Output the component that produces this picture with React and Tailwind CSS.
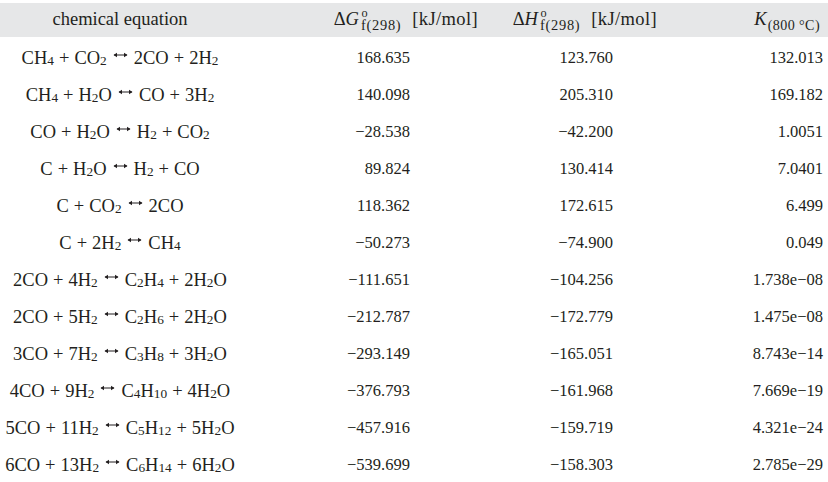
const S = ({ children }) => (
  <sub className="text-[0.72em] relative top-[0.12em] align-baseline">{children}</sub>
);

const Arrow = () => (
  <svg width="15" height="8" viewBox="0 0 15 8" className="inline-block mx-[6px] align-[0.25em]">
    <path d="M1 4 H14" stroke="#231f20" strokeWidth="1" />
    <path d="M0.5 4 L4 1.8 L4 6.2 Z" fill="#231f20" />
    <path d="M14.5 4 L11 1.8 L11 6.2 Z" fill="#231f20" />
  </svg>
);

const P = () => <span className="mx-[5px]">+</span>;

const rows = [
  [<>CH<S>4</S><P />CO<S>2</S><Arrow />2CO<P />2H<S>2</S></>, "168.635", "123.760", "132.013"],
  [<>CH<S>4</S><P />H<S>2</S>O<Arrow />CO<P />3H<S>2</S></>, "140.098", "205.310", "169.182"],
  [<>CO<P />H<S>2</S>O<Arrow />H<S>2</S><P />CO<S>2</S></>, "−28.538", "−42.200", "1.0051"],
  [<>C<P />H<S>2</S>O<Arrow />H<S>2</S><P />CO</>, "89.824", "130.414", "7.0401"],
  [<>C<P />CO<S>2</S><Arrow />2CO</>, "118.362", "172.615", "6.499"],
  [<>C<P />2H<S>2</S><Arrow />CH<S>4</S></>, "−50.273", "−74.900", "0.049"],
  [<>2CO<P />4H<S>2</S><Arrow />C<S>2</S>H<S>4</S><P />2H<S>2</S>O</>, "−111.651", "−104.256", "1.738e−08"],
  [<>2CO<P />5H<S>2</S><Arrow />C<S>2</S>H<S>6</S><P />2H<S>2</S>O</>, "−212.787", "−172.779", "1.475e−08"],
  [<>3CO<P />7H<S>2</S><Arrow />C<S>3</S>H<S>8</S><P />3H<S>2</S>O</>, "−293.149", "−165.051", "8.743e−14"],
  [<>4CO<P />9H<S>2</S><Arrow />C<S>4</S>H<S>10</S><P />4H<S>2</S>O</>, "−376.793", "−161.968", "7.669e−19"],
  [<>5CO<P />11H<S>2</S><Arrow />C<S>5</S>H<S>12</S><P />5H<S>2</S>O</>, "−457.916", "−159.719", "4.321e−24"],
  [<>6CO<P />13H<S>2</S><Arrow />C<S>6</S>H<S>14</S><P />6H<S>2</S>O</>, "−539.699", "−158.303", "2.785e−29"],
];

// ΔG°f(298) style header: small "o" sits above the "f(298)" subscript
const Delta = ({ sym }) => (
  <span className="whitespace-nowrap">
    Δ<i className="mr-[2px]">{sym}</i>
    <span className="relative top-[0.32em] text-[0.78em] tracking-[0.05em]">
      f(298)
      <span className="absolute left-[0.05em] top-[-1.05em] text-[0.85em]">o</span>
    </span>
    <span className="ml-[11px] tracking-[0.02em]">[kJ/mol]</span>
  </span>
);

export default function App() {
  return (
    <div
      className="w-[828px] h-[482px] overflow-hidden bg-white text-[#231f20] text-[18.5px] pt-[3px]"
      style={{ fontFamily: '"Liberation Serif", "Times New Roman", serif' }}
    >
      <div className="grid grid-cols-[240px_250px_185px_153px] h-[34px] items-center bg-[#e6e7e8]">
        <div className="text-center">chemical equation</div>
        <div className="text-right pr-[12px]">
          <Delta sym="G" />
        </div>
        <div className="text-right pr-[18px]">
          <Delta sym="H" />
        </div>
        <div className="text-right pr-[8px] whitespace-nowrap">
          <i>K</i>
          <span className="text-[0.76em] relative top-[0.35em] ml-[1px] tracking-[0.03em]">(800 °C)</span>
        </div>
      </div>
      <div className="mt-[3px]">
        {rows.map((r, i) => (
          <div key={i} className="grid grid-cols-[240px_250px_185px_153px] h-[37px] items-center">
            <div className="text-center whitespace-nowrap">{r[0]}</div>
            <div className="text-right pr-[80px] text-[16.5px]">{r[1]}</div>
            <div className="text-right pr-[62px] text-[16.5px]">{r[2]}</div>
            <div className="text-right pr-[5px] text-[16.5px]">{r[3]}</div>
          </div>
        ))}
      </div>
    </div>
  );
}
